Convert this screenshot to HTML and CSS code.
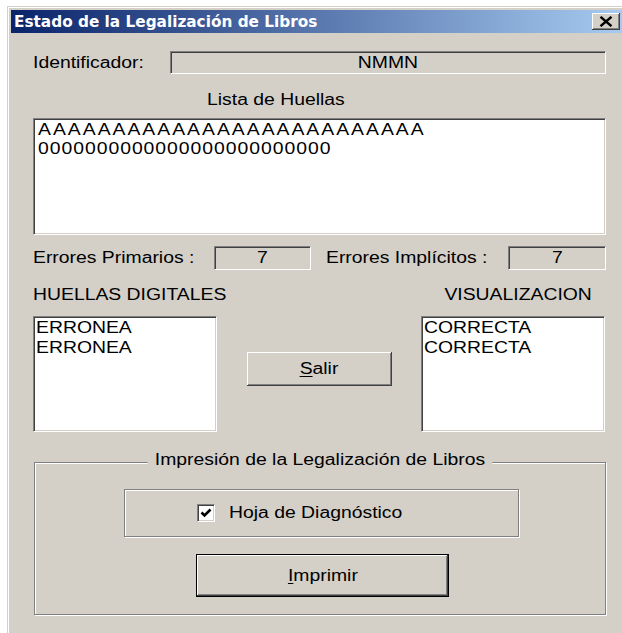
FILE: index.html
```html
<!DOCTYPE html>
<html lang="es">
<head>
<meta charset="utf-8">
<title>Estado de la Legalización de Libros</title>
<link rel="stylesheet" href="styles.css">
</head>
<body>
<div class="window">
  <div class="titlebar">
    <span class="title">Estado de la Legalización de Libros</span>
    <button class="close" aria-label="Cerrar">
      <svg width="14" height="11" viewBox="0 0 14 11"><path d="M1.5 0.8 L12.5 10.2 M12.5 0.8 L1.5 10.2" stroke="#000" stroke-width="2.4" fill="none"/></svg>
    </button>
  </div>

  <div class="client">
    <div class="row row-id">
      <span class="label label-id"><span class="t">Identificador:</span></span>
      <div class="field field-id"><span class="t t-c">NMMN</span></div>
    </div>

    <div class="caption-list"><span class="t">Lista de Huellas</span></div>

    <div class="memo">
      <div class="memo-line"><span class="t line-a">AAAAAAAAAAAAAAAAAAAAAAAAAA</span></div>
      <div class="memo-line"><span class="t line-0">0000000000000000000000000</span></div>
    </div>

    <div class="row row-err">
      <span class="label label-prim"><span class="t">Errores Primarios :</span></span>
      <div class="field field-num"><span class="t t-c">7</span></div>
      <span class="label label-impl"><span class="t">Errores Implícitos :</span></span>
      <div class="field field-num field-num-wide"><span class="t t-c">7</span></div>
    </div>

    <div class="row row-heads">
      <span class="label"><span class="t">HUELLAS DIGITALES</span></span>
      <span class="label"><span class="t t-r">VISUALIZACION</span></span>
    </div>

    <div class="row row-lists">
      <div class="listbox">
        <div class="list-item"><span class="t">ERRONEA</span></div>
        <div class="list-item"><span class="t">ERRONEA</span></div>
      </div>
      <button class="btn btn-salir"><span class="t t-c"><u>S</u>alir</span></button>
      <div class="listbox">
        <div class="list-item"><span class="t">CORRECTA</span></div>
        <div class="list-item"><span class="t">CORRECTA</span></div>
      </div>
    </div>

    <div class="group">
      <span class="legend">Impresión de la Legalización de Libros</span>
      <div class="check-frame">
        <span class="checkbox">
          <svg width="12" height="12" viewBox="0 0 12 12"><path d="M1.5 5.5 L4.5 8.5 L10.5 2.5" stroke="#000" stroke-width="2.6" fill="none"/></svg>
        </span>
        <span class="label"><span class="t">Hoja de Diagnóstico</span></span>
      </div>
      <button class="btn btn-default"><span class="t t-c"><u>I</u>mprimir</span></button>
    </div>
  </div>
</div>
</body>
</html>
```

FILE: styles.css
```css
* {
  box-sizing: border-box;
}

html,
body {
  margin: 0;
  padding: 0;
  overflow: hidden;
}

body {
  width: 622px;
  height: 633px;
  background: #ffffff;
  font-family: "Liberation Sans", Arial, sans-serif;
  font-size: 16px;
  color: #000000;
}

/* Dialog text is drawn in a wide face: stretch the sans glyphs */
.t {
  display: inline-block;
  white-space: nowrap;
  transform: scaleX(1.21);
  transform-origin: left center;
}

.t-c {
  transform-origin: center center;
}

.t-r {
  transform-origin: right center;
}

/* Classic window frame */
.window {
  margin: 6px 0 0 7px;
  width: 615px;
  height: 627px;
  background: #d4d0c8;
  border-top: 1px solid #d4d0c8;
  border-left: 1px solid #d4d0c8;
  padding: 3px 0 0 3px;
  box-shadow: inset 1px 1px 0 #ffffff;
}

.titlebar {
  width: 611px;
  height: 23px;
  display: flex;
  align-items: center;
  justify-content: space-between;
  padding: 0 2px 0 3px;
  background: linear-gradient(to right, #0a246a, #a6caf0);
}

.title {
  font-family: "DejaVu Sans", Verdana, sans-serif;
  font-weight: bold;
  font-size: 15.3px;
  color: #ffffff;
  white-space: nowrap;
}

.close {
  width: 28px;
  height: 17px;
  padding: 0;
  border: none;
  background: #d4d0c8;
  display: flex;
  align-items: center;
  justify-content: center;
  box-shadow: inset -1px -1px 0 #404040, inset 1px 1px 0 #ffffff,
    inset -2px -2px 0 #808080, inset 2px 2px 0 #d4d0c8;
}

/* Dialog body */
.client {
  width: 611px;
  padding: 18px 0 0 22px;
}

.row {
  display: flex;
  align-items: center;
  width: 573px;
}

.label {
  white-space: nowrap;
}

/* Sunken edit / list borders */
.field,
.memo,
.listbox,
.checkbox {
  border: 1px solid;
  border-color: #808080 #ffffff #ffffff #808080;
  box-shadow: inset 1px 1px 0 #404040, inset -1px -1px 0 #d4d0c8;
}

.field {
  display: flex;
  align-items: center;
  justify-content: center;
  background: #d4d0c8;
}

.row-id {
  height: 23px;
}

.label-id {
  width: 137px;
}

.field-id {
  width: 436px;
  height: 23px;
}

.caption-list {
  margin-top: 16px;
  padding-left: 174px;
  line-height: 19px;
}

.memo {
  margin-top: 9px;
  width: 573px;
  height: 117px;
  background: #ffffff;
  padding: 1px 4px;
}

.memo-line {
  line-height: 19px;
  white-space: nowrap;
}

.line-a {
  letter-spacing: 1.65px;
}

.line-0 {
  letter-spacing: 0.8px;
}

.row-err {
  margin-top: 11px;
  height: 24px;
}

.label-prim {
  width: 181px;
}

.field-num {
  width: 97px;
  height: 24px;
}

.field-num-wide {
  width: 98px;
}

.label-impl {
  width: 182px;
  margin-left: 15px;
}

.row-heads {
  margin-top: 15px;
  height: 19px;
  justify-content: space-between;
  padding-right: 14px;
}

.row-lists {
  margin-top: 12px;
  height: 116px;
  align-items: flex-start;
}

.listbox {
  width: 184px;
  height: 116px;
  background: #ffffff;
  padding: 1px 2px;
}

.list-item {
  line-height: 20px;
  white-space: nowrap;
}

/* Raised push buttons */
.btn {
  font: inherit;
  color: #000000;
  padding: 0;
  border: none;
  background: #d4d0c8;
  box-shadow: inset -1px -1px 0 #404040, inset 1px 1px 0 #ffffff,
    inset -2px -2px 0 #808080, inset 2px 2px 0 #d4d0c8;
}

.btn u {
  text-decoration-thickness: 1px;
  text-underline-offset: 2px;
}

.btn-salir {
  width: 145px;
  height: 34px;
  margin: 36px 29px 0 30px;
}

/* Etched group box */
.group {
  position: relative;
  margin-top: 30px;
  margin-left: 1px;
  width: 572px;
  height: 153px;
  border: 1px solid #808080;
  box-shadow: inset 1px 1px 0 #ffffff, 1px 1px 0 #ffffff;
  padding-top: 26px;
}

.legend {
  position: absolute;
  top: -13px;
  left: 50%;
  transform: translateX(-50%) scaleX(1.21);
  padding: 0 6px;
  line-height: 19px;
  white-space: nowrap;
  background: #d4d0c8;
}

.check-frame {
  margin-left: 89px;
  width: 395px;
  height: 48px;
  display: flex;
  align-items: center;
  padding-left: 72px;
  border: 1px solid #808080;
  box-shadow: inset 1px 1px 0 #ffffff, 1px 1px 0 #ffffff;
}

.checkbox {
  width: 18px;
  height: 18px;
  margin-right: 14px;
  background: #ffffff;
  display: flex;
  align-items: center;
  justify-content: center;
}

.btn-default {
  display: block;
  width: 253px;
  height: 43px;
  margin: 17px 0 0 161px;
  border: 1px solid #000000;
}
```
